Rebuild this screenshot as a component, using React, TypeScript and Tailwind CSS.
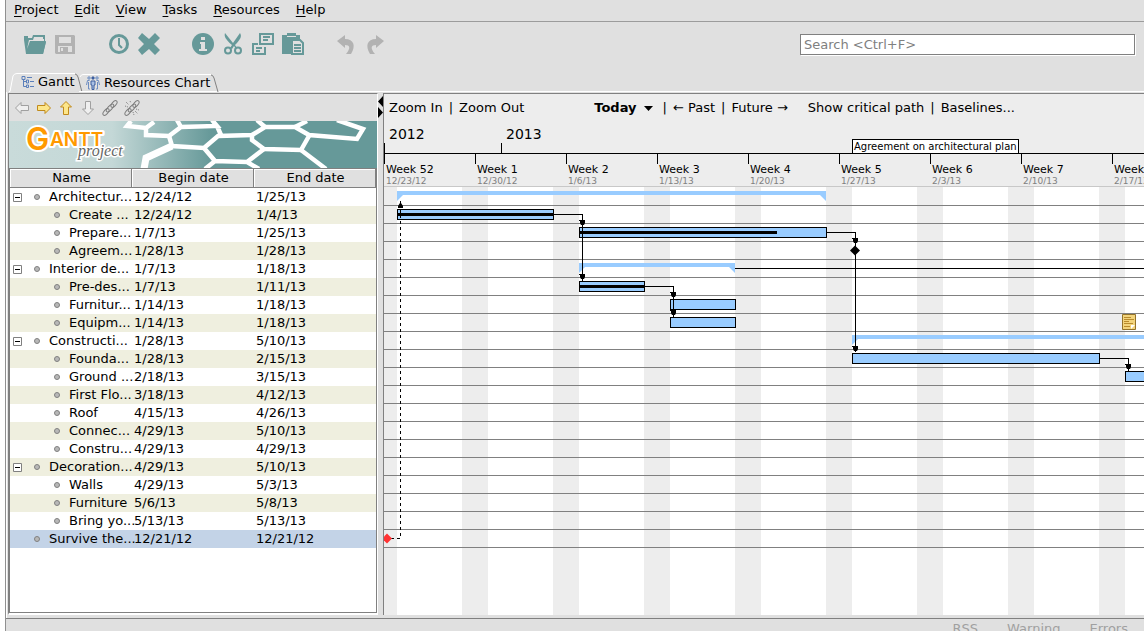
import React, { useState } from "react";

type Task = {
  name: string;
  begin: string;
  end: string;
  group?: boolean;
  leaf?: boolean;
};

const tasks: Task[] = [
  { name: "Architectur...", begin: "12/24/12", end: "1/25/13", group: true },
  { name: "Create ...", begin: "12/24/12", end: "1/4/13" },
  { name: "Prepare...", begin: "1/7/13", end: "1/25/13" },
  { name: "Agreem...", begin: "1/28/13", end: "1/28/13" },
  { name: "Interior de...", begin: "1/7/13", end: "1/18/13", group: true },
  { name: "Pre-des...", begin: "1/7/13", end: "1/11/13" },
  { name: "Furnitur...", begin: "1/14/13", end: "1/18/13" },
  { name: "Equipm...", begin: "1/14/13", end: "1/18/13" },
  { name: "Constructi...", begin: "1/28/13", end: "5/10/13", group: true },
  { name: "Founda...", begin: "1/28/13", end: "2/15/13" },
  { name: "Ground ...", begin: "2/18/13", end: "3/15/13" },
  { name: "First Flo...", begin: "3/18/13", end: "4/12/13" },
  { name: "Roof", begin: "4/15/13", end: "4/26/13" },
  { name: "Connec...", begin: "4/29/13", end: "5/10/13" },
  { name: "Constru...", begin: "4/29/13", end: "4/29/13" },
  { name: "Decoration...", begin: "4/29/13", end: "5/10/13", group: true },
  { name: "Walls", begin: "4/29/13", end: "5/3/13" },
  { name: "Furniture", begin: "5/6/13", end: "5/8/13" },
  { name: "Bring yo...", begin: "5/13/13", end: "5/13/13" },
  { name: "Survive the...", begin: "12/21/12", end: "12/21/12", leaf: true },
];

const weeks = [
  { label: "Week 52", date: "12/23/12" },
  { label: "Week 1", date: "12/30/12" },
  { label: "Week 2", date: "1/6/13" },
  { label: "Week 3", date: "1/13/13" },
  { label: "Week 4", date: "1/20/13" },
  { label: "Week 5", date: "1/27/13" },
  { label: "Week 6", date: "2/3/13" },
  { label: "Week 7", date: "2/10/13" },
  { label: "Week 8", date: "2/17/13" },
];

// one day is 13 units wide, one row is 18 units high
const DAY = 13;
const ROW = 18;

const bars = [
  { row: 1, start: 1, days: 12, done: 156 },
  { row: 2, start: 15, days: 19, done: 198 },
  { row: 5, start: 15, days: 5, done: 65 },
  { row: 6, start: 22, days: 5, done: 0 },
  { row: 7, start: 22, days: 5, done: 0 },
  { row: 9, start: 36, days: 19, done: 0 },
  { row: 10, start: 57, days: 26, done: 0 },
];

const summaries = [
  { row: 0, start: 1, days: 33 },
  { row: 4, start: 15, days: 12 },
  { row: 8, start: 36, days: 103 },
];

const menus = ["Project", "Edit", "View", "Tasks", "Resources", "Help"];

const MenuBar = () => (
  <nav className="flex h-[22px] shrink-0 items-center gap-4 border-b border-[#9c9c9c] pb-[2px] pl-2">
    {menus.map((menu) => (
      <button key={menu} className="leading-4">
        <span className="underline underline-offset-2">{menu[0]}</span>
        {menu.slice(1)}
      </button>
    ))}
  </nav>
);

const ToolButton = ({
  label,
  children,
}: {
  label: string;
  children: React.ReactNode;
}) => (
  <button aria-label={label} className="flex h-6 w-[30px] justify-center">
    <svg width="24" height="24" viewBox="0 0 24 24" fill="none">
      {children}
    </svg>
  </button>
);

const ToolBar = () => {
  const [query, setQuery] = useState("");
  return (
    <div className="flex h-[50px] shrink-0 items-start pt-[10px] pr-[9px] pl-[14px]">
      <div className="flex">
        <ToolButton label="Open">
          <path
            fill="#669999"
            d="M1 4h4v2h4l1-3h12v6h1l-3 13H3L1 8V4Z"
          />
          <path fill="#e0e0e0" d="M11 5h9v2h1v2H7L4 17l2-9h4l1-3Z" />
          <path fill="#669999" d="M8 10h15l-3 12H4l4-12Z" />
        </ToolButton>
        <ToolButton label="Save">
          <path
            fill="#b2b2b2"
            fillRule="evenodd"
            d="M2 3h19l1 1v18H3l-1-1V3Zm4 2v6h12V5H6Zm-1 9v6h14v-6H5Z"
          />
          <path fill="#b2b2b2" d="M7 15h8v6H7z" />
          <path fill="#e0e0e0" d="M8 16h2v3H8z" />
        </ToolButton>
      </div>
      <div className="ml-6 flex">
        <ToolButton label="Properties">
          <circle cx="12" cy="12" r="8.500" stroke="#669999" strokeWidth="3" />
          <path d="M12 6v7l3 3" stroke="#669999" strokeWidth="2" />
        </ToolButton>
        <ToolButton label="Delete">
          <path
            fill="#669999"
            d="m5 1 7 6 6-6 5 5-6 6 6 6-5 5-6-6-7 6-4-5 6-6-6-6 4-5Z"
          />
        </ToolButton>
      </div>
      <div className="ml-6 flex">
        <ToolButton label="Info">
          <circle cx="12" cy="12" r="11" fill="#669999" />
          <path
            fill="#e0e0e0"
            d="M10 5h4v3h-4V5Zm-1 5h5v7h2v2H8v-2h2v-5H9v-2Z"
          />
        </ToolButton>
        <ToolButton label="Cut">
          <path
            fill="#669999"
            d="M4 1c-1 3 0 6 7 12l-2 3 2 1 2-3 2 3 1-1-2-3C20 7 21 4 19 1l-7 10L4 1Z"
          />
          <circle cx="7" cy="18.500" r="3" stroke="#669999" strokeWidth="2" />
          <circle cx="17" cy="18.500" r="3" stroke="#669999" strokeWidth="2" />
        </ToolButton>
        <ToolButton label="Copy">
          <path
            stroke="#669999"
            strokeWidth="2"
            d="M9 2h13v10H9zM7 12H2v10h12v-7"
          />
          <path
            stroke="#669999"
            strokeWidth="2"
            d="M12 5h7M12 8h5M5 16h6M5 19h4"
          />
        </ToolButton>
        <ToolButton label="Paste">
          <path fill="#669999" d="M1 3h5V1h9v2h4v4h-9v15H1V3Z" />
          <path fill="#e0e0e0" d="M6 4h9v1H6z" />
          <path
            fill="#e0e0e0"
            stroke="#669999"
            strokeWidth="2"
            d="M11 8h8l3 3v11H11z"
          />
          <path
            stroke="#669999"
            strokeWidth="2"
            d="M13 13h7M13 16h7M13 19h7"
          />
        </ToolButton>
      </div>
      <div className="ml-6 flex">
        <ToolButton label="Undo">
          <path
            fill="#b2b2b2"
            d="m2 9 8-6v4c9 0 11 7 6 15h-5c5-6 4-9-1-9v3L2 9Z"
          />
        </ToolButton>
        <ToolButton label="Redo">
          <path
            fill="#b2b2b2"
            d="m19 9-8-6v4C2 7 0 14 5 22h5c-5-6-4-9 1-9v3l8-7Z"
          />
        </ToolButton>
      </div>
      <input
        type="text"
        aria-label="Search"
        value={query}
        onChange={(e) => setQuery(e.target.value)}
        placeholder="Search <Ctrl+F>"
        className="mt-[2px] ml-auto h-[21px] w-[335px] border border-[#808080] bg-white px-[3px] shadow-[1px_1px_0_#ffffff] outline-none placeholder:text-[#808080]"
      />
    </div>
  );
};

const Tabs = () => (
  <div className="flex h-5 shrink-0 items-stretch pl-[3px]">
    <button className="relative flex w-[70px] items-center gap-1 pl-3">
      <svg
        className="absolute top-0 left-0"
        width="76"
        height="20"
        fill="none"
      >
        <path d="M0 19.500h1L4 4q1-2.500 4-2.500h58" stroke="#ffffff" />
        <path d="M66 2q2 0 3 3l4 15" stroke="#808080" />
      </svg>
      <svg width="13" height="12" viewBox="0 0 13 12" fill="none">
        <path
          d="M2.500 3v7.500H6M2.500 5.500H6M1 .5h3v3H1zM5.500 4h2v3h-2zM5.500 9h2v2.500h-2z"
          stroke="#5b7fba"
        />
        <path d="M6 1.500h5M9 5.500h4M9 10.500h4" stroke="#5b7fba" />
      </svg>
      <span className="leading-4">Gantt</span>
    </button>
    <button className="relative flex w-[140px] items-center gap-1 border-b border-white pt-[2px] pl-[7px] whitespace-nowrap">
      <svg
        className="absolute top-0 left-0"
        width="142"
        height="20"
        fill="none"
      >
        <path d="M1 5q1-2.500 3-2.500h128" stroke="#ffffff" />
        <path d="M132 3q2 0 3 3l4 14" stroke="#808080" />
      </svg>
      <svg
        className="shrink-0"
        width="14"
        height="14"
        viewBox="0 0 14 14"
        fill="none"
      >
        <path
          d="M2 1h2v2H2zM10 1h2v2h-2zM3.500 4.500H1.500L.5 9M2.500 6v7H4M10.500 4.500h2l1 4.500M11.500 6v7H10"
          stroke="#6d8dc2"
        />
        <path d="M6 1h2v2H6z" fill="#3d5f9f" stroke="#3d5f9f" />
        <path d="M5 5h4v4H8v4.500H6V9H5z" fill="#a9c0e4" stroke="#3d5f9f" />
      </svg>
      <span className="leading-4">Resources Chart</span>
    </button>
    <div className="flex-1 border-b border-white" />
  </div>
);

const ArrowIcon = ({
  label,
  turn,
  active,
}: {
  label: string;
  turn: number;
  active?: boolean;
}) => (
  <button aria-label={label}>
    <svg width="16" height="16" viewBox="0 0 16 16">
      <path
        d="M1.500 8 7 2.500v3h7.500v5H7v3Z"
        transform={`rotate(${turn} 8 8)`}
        fill={active ? "#fde68a" : "#efefef"}
        stroke={active ? "#c08a1c" : "#a0a0a0"}
      />
    </svg>
  </button>
);

const LinkIcon = ({ label, broken }: { label: string; broken?: boolean }) => (
  <button aria-label={label}>
    <svg width="16" height="16" viewBox="0 0 16 16" fill="none">
      <g stroke="#7d7d7d">
        <ellipse cx="4" cy="12" rx="4" ry="2" transform="rotate(-48 4 12)" />
        <ellipse cx="8" cy="8" rx="5" ry="2" transform="rotate(-48 8 8)" />
        <ellipse cx="12" cy="4" rx="4" ry="2" transform="rotate(-48 12 4)" />
      </g>
      {broken && (
        <path
          d="m2 2 3 3M1 6l3 1M6 1l1 2M11 11l3 3M12 9l3 1M9 12l1 3"
          stroke="#7d7d7d"
          strokeDasharray="1 1"
        />
      )}
    </svg>
  </button>
);

const Banner = () => (
  <svg
    className="block h-[47px] w-full shrink-0"
    viewBox="0 0 368 47"
    preserveAspectRatio="xMinYMid slice"
    role="img"
    aria-label="GanttProject"
  >
    <defs>
      <linearGradient id="teal">
        <stop offset="0" stopColor="#c9dbda" />
        <stop offset="0.280" stopColor="#c4d8d7" />
        <stop offset="0.550" stopColor="#669999" />
        <stop offset="1" stopColor="#669999" />
      </linearGradient>
    </defs>
    <rect width="368" height="47" fill="url(#teal)" />
    <g fill="none" stroke="#ffffff" strokeWidth="4.500">
      <path d="M122 0l-4 5 19 2 8-6M137 7v7l23 1 12-9 36-1-5-6M172 6l-4-7M208 5l4 9" />
      <path d="M160 15l3 10 32 2 14-12 34-1 13-8h30l14 8 48 4 6-10-26-9" />
      <path d="M256 6l-8-7M286 6l12-6M243 14v5l12 9 37 1 8-14" />
      <path d="M255 28l-17 13-32-1-11-13M238 41l12 7M206 40l-10 8M292 29l25 19" />
      <path d="M163 25l-26 12-2 11" strokeWidth="7" />
    </g>
    <g
      fontFamily="Inter, sans-serif"
      fontWeight="600"
      stroke="#ffffff"
      strokeWidth="4"
      strokeLinejoin="round"
      paintOrder="stroke"
      fill="#ff9900"
    >
      <text x="17" y="29" fontSize="31">
        G
      </text>
      <text x="41" y="25" fontSize="19">
        ANTT
      </text>
    </g>
    <text
      x="69"
      y="35"
      fontFamily="'Liberation Serif', serif"
      fontStyle="italic"
      fontSize="16"
      fill="#666666"
      stroke="#ffffff"
      strokeWidth="3"
      paintOrder="stroke"
    >
      project
    </text>
  </svg>
);

const TaskTable = () => (
  <div className="min-h-0 flex-1 overflow-hidden border border-[#808080] bg-white">
    <table className="w-full table-fixed border-separate border-spacing-0">
      <thead>
        <tr className="bg-[#e0e0e0]">
          {["Name", "Begin date", "End date"].map((title) => (
            <th
              key={title}
              className="border-r border-b border-[#808080] p-0 pl-[2px] text-center leading-[18px] font-normal shadow-[inset_1px_1px_0_#ffffff]"
            >
              {title}
            </th>
          ))}
        </tr>
      </thead>
      <tbody>
        {tasks.map((task, i) => (
          <tr
            key={i}
            className={
              task.leaf
                ? "h-[18px] bg-[#c3d3e7]"
                : i % 2
                  ? "h-[18px] bg-[#efefdf]"
                  : "h-[18px]"
            }
          >
            <td className="p-0">
              <div
                className={
                  task.group
                    ? "flex items-center pl-[3px]"
                    : task.leaf
                      ? "flex items-center pl-6"
                      : "flex items-center pl-11"
                }
              >
                {task.group && (
                  <button aria-label="Collapse" className="mr-3">
                    <svg width="9" height="9" fill="none" className="block">
                      <path d="M.5.5h8v8h-8z" fill="#ffffff" stroke="#808080" />
                      <path d="M2 4.500h5" stroke="#000000" />
                    </svg>
                  </button>
                )}
                <span className="mr-[9px] h-[6px] w-[6px] shrink-0 rounded-full border border-[#808080] bg-[#b8b8b8]" />
                <span className="leading-[18px] whitespace-nowrap">
                  {task.name}
                </span>
              </div>
            </td>
            <td className="p-0 pl-[2px] leading-[18px]">{task.begin}</td>
            <td className="p-0 pl-[2px] leading-[18px]">{task.end}</td>
          </tr>
        ))}
      </tbody>
    </table>
  </div>
);

const TaskPane = () => (
  <section className="flex w-[370px] shrink-0 flex-col border-t border-r border-b-2 border-l border-t-[#808080] border-r-white border-b-white border-l-[#808080]">
    <div className="flex h-[27px] shrink-0 items-center gap-[6px] pl-[5px]">
      <ArrowIcon label="Unindent" turn={0} />
      <ArrowIcon label="Indent" turn={180} active />
      <ArrowIcon label="Move up" turn={90} active />
      <ArrowIcon label="Move down" turn={270} />
      <LinkIcon label="Link" />
      <LinkIcon label="Unlink" broken />
    </div>
    <Banner />
    <TaskTable />
  </section>
);

const Chart = () => (
  <svg className="block h-full w-full">
    {weeks.map((week, i) => (
      <rect
        key={week.date}
        x={i * 91 - 13}
        width="26"
        height="100%"
        fill="#ededed"
      />
    ))}
    {tasks.map((_, i) => (
      <rect
        key={i}
        y={(i + 1) * ROW}
        width="100%"
        height="1"
        fill="#808080"
      />
    ))}
    {summaries.map((s) => (
      <g
        key={s.row}
        fill="#99ccff"
        transform={`translate(${s.start * DAY} ${s.row * ROW + 4})`}
      >
        <rect width={s.days * DAY} height="4" />
        <path d="M0 0v10l6-6Z" />
        <path d={`M${s.days * DAY} 0v10l-6-6Z`} />
      </g>
    ))}
    {bars.map((bar) => (
      <g
        key={bar.row}
        transform={`translate(${bar.start * DAY} ${bar.row * ROW + 4})`}
      >
        <rect
          x="0.500"
          y="0.500"
          width={bar.days * DAY}
          height="10"
          fill="#99ccff"
          stroke="#000000"
        />
        <rect y="4" width={bar.done} height="3" fill="#000000" />
      </g>
    ))}
    <g fill="none" stroke="#000000" shapeRendering="crispEdges">
      <path d="M170 27.500h28.500V94" />
      <path d="M261 99.500h28.500V130" />
      <path d="M443 45.500h28.500V165" />
      <path d="M716 171.500h28.500V184" />
      <path d="M351 81.500h1200" />
      <path d="M7 351.500h9.500V15" strokeDasharray="3 3" />
      <path d="M16.500 14v6M16.500 24v7" />
    </g>
    {[
      [198, 33],
      [198, 87],
      [289, 105],
      [289, 123],
      [471, 51],
      [471, 159],
      [744, 177],
    ].map(([x, y]) => (
      <path
        key={`${x}-${y}`}
        d="M-3 0h6v3L2 5h-3L-2 3V1h-1Z"
        transform={`translate(${x} ${y})`}
      />
    ))}
    <path d="M14 21v-2l2-3h1l2 3v2Z" />
    <path d="m471 58.500 5 5-5 5-5-5Z" />
    <path d="m3 346.500 5 5-5 5-5-5Z" fill="#ff3333" />
    <g transform="translate(738 127)">
      <path d="M.5.5h13v15H.5z" fill="#f3d47c" stroke="#94732a" />
      <path
        d="M2 3.500h7M2 5.500h10M2 7.500h5M2 9.500h9M2 12.500h6"
        stroke="#b98b2d"
      />
      <path d="M9 15v-4h4Z" fill="#ffffff" />
    </g>
  </svg>
);

const ChartPane = () => (
  <section className="flex min-w-0 flex-1 flex-col overflow-hidden border-t border-l border-[#808080] bg-[#ededed]">
    <div className="flex h-[26px] shrink-0 items-center gap-[6px] pt-[2px] pl-[5px] whitespace-nowrap">
      <button>Zoom In</button>
      <span>|</span>
      <button>Zoom Out</button>
      <button className="ml-16 flex items-center gap-[7px] font-bold">
        Today
        <svg width="9" height="5">
          <path d="M0 0h9L4.500 5Z" />
        </svg>
      </button>
      <span className="ml-1">|</span>
      <button>← Past</button>
      <span>|</span>
      <button>Future →</button>
      <button className="ml-[14px]">Show critical path</button>
      <span>|</span>
      <button>Baselines...</button>
    </div>
    <div className="relative flex shrink-0 border-b border-black pt-[5px] text-sm leading-[18px]">
      <div className="w-[117px] shrink-0">
        <div className="pl-[5px]">2012</div>
        <div className="h-[10px] border-l border-black" />
      </div>
      <div>
        <div className="pl-[5px]">2013</div>
        <div className="h-[10px] border-l border-black" />
      </div>
      <div className="absolute bottom-0 left-[468px] border border-b-0 border-black bg-white px-px text-[10px] leading-[13px] whitespace-nowrap">
        Agreement on architectural plan
      </div>
    </div>
    <div className="flex shrink-0 overflow-hidden border-b border-[#c8c8c8]">
      {weeks.map((week) => (
        <div key={week.date} className="w-[91px] shrink-0">
          <div className="h-[10px] border-l border-black" />
          <div className="pl-[2px] text-[11px] leading-3">{week.label}</div>
          <div className="pl-[2px] text-[9px] leading-[10px] text-[#808080]">
            {week.date}
          </div>
        </div>
      ))}
    </div>
    <div className="min-h-0 flex-1 overflow-hidden bg-white">
      <Chart />
    </div>
  </section>
);

const App: React.FC = () => {
  return (
    <div className="h-screen overflow-hidden bg-white pl-[5px] font-['DejaVu_Sans',sans-serif] text-[13px] text-black">
      <div className="flex h-full flex-col border-l border-[#909090] bg-[#e0e0e0]">
        <MenuBar />
        <ToolBar />
        <Tabs />
        <main className="flex min-h-0 flex-1 border-l border-white pt-px pb-[3px] pl-px">
          <TaskPane />
          <div className="w-[5px] shrink-0">
            <svg width="5" height="26" className="block">
              <path d="M5 3v11L0 8.500ZM0 14v11l5-5.500Z" />
            </svg>
          </div>
          <ChartPane />
        </main>
        <footer className="flex h-[13px] shrink-0 justify-end gap-[29px] overflow-hidden border-t border-[#808080] pt-[2px] pr-4 leading-4 text-[#a0a0a0]">
          <span>RSS</span>
          <span>Warning</span>
          <span>Errors</span>
        </footer>
      </div>
    </div>
  );
};

export default App;
